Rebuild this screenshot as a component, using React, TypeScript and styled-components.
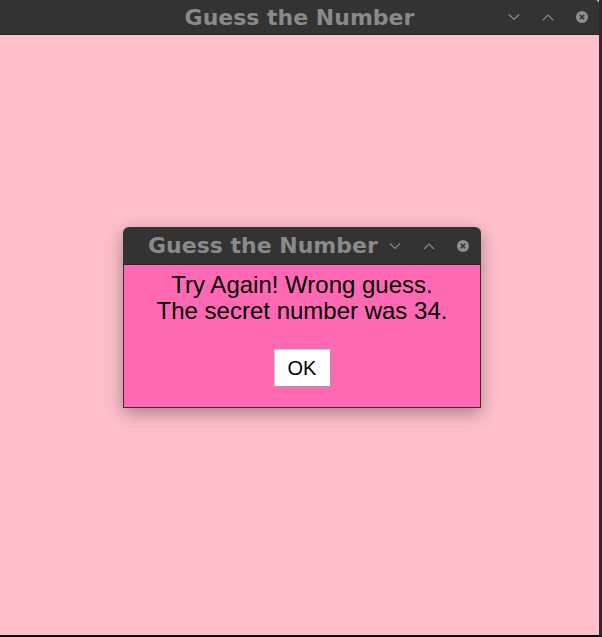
import React from 'react'
import styled, { createGlobalStyle } from 'styled-components'

const GlobalStyle = createGlobalStyle`
  html, body {
    margin: 0;
    padding: 0;
    background: #000;
  }
`

const Frame = styled.div`
  width: 602px;
  height: 637px;
  display: flex;
  flex-direction: column;
  box-sizing: border-box;
  border-right: 3px solid #2b2b2b;
  border-bottom: 2px solid #0a0a0a;
  background: #ffc0cb;
`

const TitleBar = styled.div<{ $small?: boolean }>`
  position: relative;
  flex: none;
  height: ${(p) => (p.$small ? '38px' : '35px')};
  background: #333333;
  border-bottom: 1px solid #262626;
  border-radius: ${(p) => (p.$small ? '6px 6px 0 0' : '0 4px 0 0')};
  display: flex;
  align-items: center;
  justify-content: ${(p) => (p.$small ? 'flex-start' : 'center')};
  padding-left: ${(p) => (p.$small ? '25px' : '0')};
  box-sizing: border-box;
`

const Title = styled.span`
  font-family: 'DejaVu Sans', sans-serif;
  font-weight: bold;
  font-size: 22px;
  color: #8a8a8a;
  white-space: nowrap;
`

const Controls = styled.div<{ $small?: boolean }>`
  position: absolute;
  right: ${(p) => (p.$small ? '12px' : '11px')};
  top: 0;
  bottom: 0;
  display: flex;
  align-items: center;
  gap: 22px;
`

const Content = styled.div`
  flex: 1;
  padding: 192px 0 0 123px;
`

const Dialog = styled.div`
  width: 358px;
  display: flex;
  flex-direction: column;
  box-shadow: 0 5px 18px rgba(0, 0, 0, 0.35);
  border-radius: 6px 6px 0 0;
`

const DialogBody = styled.div`
  height: 143px;
  box-sizing: border-box;
  background: #ff69b4;
  border: 1px solid #333333;
  border-top: none;
  display: flex;
  flex-direction: column;
  align-items: center;
  padding-top: 7px;
`

const Message = styled.div`
  font-family: 'Liberation Sans', Arial, sans-serif;
  font-size: 24px;
  line-height: 26px;
  color: #000;
  text-align: center;
`

const OkButton = styled.button`
  margin-top: 25px;
  width: 57px;
  height: 38px;
  background: #fff;
  border: 1px solid #c8c8c8;
  border-right-color: #a0a0a0;
  border-bottom-color: #a0a0a0;
  font-family: 'Liberation Sans', Arial, sans-serif;
  font-size: 20px;
  color: #000;
  padding: 0;
`

const Chevron = ({ up }: { up?: boolean }) => (
  <svg width="12" height="8" viewBox="0 0 12 8">
    <path
      d={up ? 'M1 7 L6 2 L11 7' : 'M1 1.5 L6 6.5 L11 1.5'}
      fill="none"
      stroke="#8a8a8a"
      strokeWidth="1.2"
    />
  </svg>
)

const CloseIcon = () => (
  <svg width="12" height="12" viewBox="0 0 12 12">
    <circle cx="6" cy="6" r="6" fill="#8f8f8f" />
    <path d="M3.8 3.8 L8.2 8.2 M8.2 3.8 L3.8 8.2" stroke="#333" strokeWidth="1.6" />
  </svg>
)

const WindowControls = ({ small }: { small?: boolean }) => (
  <Controls $small={small}>
    <Chevron />
    <Chevron up />
    <CloseIcon />
  </Controls>
)

const App = () => {
  return (
    <>
      <GlobalStyle />
      <Frame>
        <TitleBar>
          <Title>Guess the Number</Title>
          <WindowControls />
        </TitleBar>
        <Content>
          <Dialog>
            <TitleBar $small>
              <Title>Guess the Number</Title>
              <WindowControls small />
            </TitleBar>
            <DialogBody>
              <Message>
                Try Again! Wrong guess.
                <br />
                The secret number was 34.
              </Message>
              <OkButton>OK</OkButton>
            </DialogBody>
          </Dialog>
        </Content>
      </Frame>
    </>
  )
}

export default App
